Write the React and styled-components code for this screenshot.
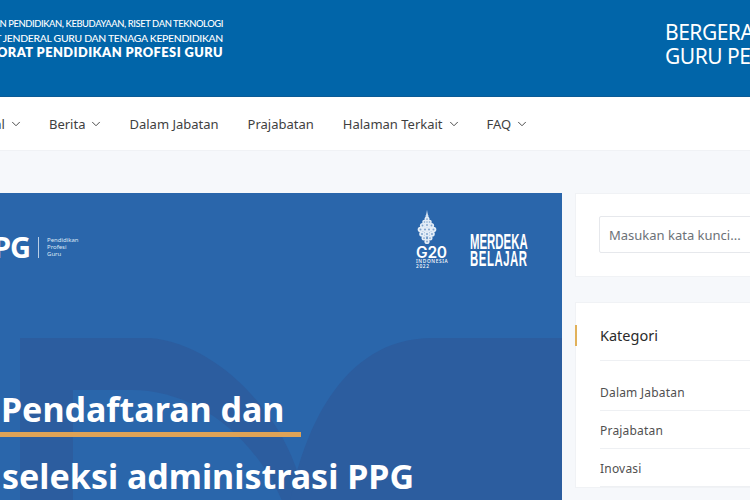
import React from "react";
import styled, { createGlobalStyle } from "styled-components";
import { ChevronDown } from "lucide-react";

const Global = createGlobalStyle`
  html, body {
    margin: 0;
    padding: 0;
    width: 750px;
    height: 500px;
    overflow: hidden;
    background: #f6f8fb;
    font-family: "Noto Sans", "Liberation Sans", sans-serif;
  }
`;

const Page = styled.div`
  width: 750px;
  height: 500px;
  overflow: hidden;
`;

const Header = styled.header`
  height: 97px;
  background: #0165a9;
  border-bottom: 1px solid #0b5b96;
  box-sizing: border-box;
  display: flex;
  color: #fff;
`;

const Brand = styled.div`
  flex: 0 0 223px;
  min-width: 0;
  padding-top: 17px;
  display: flex;
  flex-direction: column;
  align-items: flex-end;
  white-space: nowrap;
`;

const BrandLine = styled.div`
  font-family: "Lato", sans-serif;
  font-size: ${(p) => p.$size};
  font-weight: ${(p) => (p.$big ? 800 : 500)};
  letter-spacing: ${(p) => p.$track};
  line-height: 14px;
`;

const Tagline = styled.div`
  margin-left: 442px;
  padding-top: 21px;
  font-size: 21px;
  letter-spacing: -0.5px;
  line-height: 23.5px;
  white-space: nowrap;
`;

const Nav = styled.nav`
  height: 53px;
  background: #fff;
  border-bottom: 1px solid #f0f2f5;
  display: flex;
  align-items: center;
  gap: 29px;
  margin-left: -31.5px;
`;

const NavItem = styled.a`
  display: flex;
  align-items: center;
  font-size: 13px;
  color: #3f3f3f;
  white-space: nowrap;
  svg {
    margin: 0 -3px 0 4px;
  }
`;

const Main = styled.main`
  display: flex;
  align-items: flex-start;
  gap: 13px;
  margin: 42px 0 0 -38px;
`;

const Banner = styled.section`
  position: relative;
  flex: 0 0 600px;
  height: 320px;
  background: #2a66ab;
  color: #fff;
  overflow: hidden;
`;

const BannerShapes = styled.svg`
  position: absolute;
  inset: 0;
`;

const BannerBody = styled.div`
  position: relative;
  height: 100%;
`;

const BannerTop = styled.div`
  display: flex;
  justify-content: space-between;
  padding: 17px 34px 0 0;
`;

const PpgLogo = styled.div`
  display: flex;
  align-items: center;
  align-self: flex-start;
  margin-top: 26px;
  margin-left: 14px;
`;

const PpgMark = styled.span`
  font-size: 29px;
  font-weight: 700;
  line-height: 22px;
  letter-spacing: -1px;
`;

const PpgDivider = styled.span`
  width: 1px;
  height: 21px;
  margin: 0 8px;
  background: #b9cee6;
`;

const PpgCaption = styled.span`
  font-size: 6px;
  line-height: 7px;
  color: #dce8f5;
`;

const Partners = styled.div`
  display: flex;
  align-items: flex-end;
  gap: 20px;
`;

const G20 = styled.div`
  width: 34px;
  display: flex;
  flex-direction: column;
  align-items: flex-start;
  svg {
    margin-left: 1px;
  }
`;

const G20Mark = styled.span`
  font-family: "Inter", sans-serif;
  font-size: 15.5px;
  font-weight: 600;
  line-height: 12px;
  margin-top: 2px;
  letter-spacing: -0.2px;
`;

const G20Small = styled.span`
  font-size: 4.8px;
  font-weight: 500;
  line-height: 5px;
  letter-spacing: 0.65px;
  white-space: nowrap;
  &:first-of-type {
    margin-top: 1px;
  }
`;

const Merdeka = styled.div`
  font-family: "Liberation Sans", sans-serif;
  font-size: 21.5px;
  font-weight: 700;
  line-height: 17px;
  width: 58px;
  margin-bottom: 1px;
  white-space: nowrap;
  transform: scaleX(0.53);
  transform-origin: left center;
`;

const BelajarLine = styled.span`
  letter-spacing: 1px;
`;

const Title = styled.h1`
  margin: ${(p) => p.$margin};
  font-size: 34px;
  font-weight: 700;
  line-height: 40px;
  white-space: nowrap;
`;

const TitleRule = styled.div`
  width: 339px;
  height: 5px;
  margin: 3px 0 19px;
  background: #dfa356;
`;

const Sidebar = styled.aside`
  flex: 0 0 230px;
  display: flex;
  flex-direction: column;
  gap: 25px;
`;

const Card = styled.div`
  position: relative;
  background: #fff;
  border: 1px solid #f0f2f5;
  box-sizing: border-box;
  padding: ${(p) => p.$pad};
`;

const Search = styled.input`
  display: block;
  box-sizing: border-box;
  width: 100%;
  height: 37px;
  padding: 0 9px;
  border: 1px solid #e6e8ec;
  border-radius: 2px;
  font-family: inherit;
  font-size: 13px;
  color: #6c7278;
  background: #fff;
  outline: none;
  &::placeholder {
    color: #6c7278;
    opacity: 1;
  }
`;

const CardTitle = styled.h2`
  position: relative;
  margin: 0;
  padding: 0 0 15px;
  font-size: 14.5px;
  font-weight: 400;
  line-height: 20px;
  color: #2b2b2b;
  border-bottom: 1px solid #eef0f3;
  &::before {
    content: "";
    position: absolute;
    left: -25px;
    top: 0;
    width: 2px;
    height: 21px;
    background: #e1b15a;
  }
`;

const CatList = styled.ul`
  list-style: none;
  margin: 13px 0 0;
  padding: 0;
`;

const CatItem = styled.li`
  height: 37px;
  margin-top: 1px;
  box-sizing: border-box;
  display: flex;
  align-items: center;
  font-size: 12px;
  letter-spacing: 0.2px;
  color: #505050;
  border-bottom: 1px solid #eef0f3;
`;

function NavLink({ label, menu }) {
  return (
    <NavItem>
      {label}
      {menu && <ChevronDown size={14} strokeWidth={1.6} />}
    </NavItem>
  );
}

function Gunungan() {
  const lobes = [
    [10, 6, 1.5], [10, 9, 2.5], [7.5, 12, 2.3], [12.5, 12, 2.3],
    [5.5, 15.5, 2.6], [10, 15, 2.6], [14.5, 15.5, 2.6],
    [3.5, 19.5, 2.8], [8, 19.5, 2.8], [12, 19.5, 2.8], [16.5, 19.5, 2.8],
    [5, 24, 2.8], [10, 24, 2.8], [15, 24, 2.8],
    [7, 28, 2.5], [13, 28, 2.5], [10, 31.5, 2.6],
  ];
  return (
    <svg width="20" height="35" viewBox="0 0 20 35" fill="none">
      <path d="M10 0 L11 6 H9 Z" fill="#e8f0f8" />
      {lobes.map(([cx, cy, r]) => (
        <g key={`${cx}-${cy}`}>
          <circle cx={cx} cy={cy} r={r} fill="#e4edf7" />
          <circle cx={cx} cy={cy} r={r * 0.35} fill="#7fa3cd" />
        </g>
      ))}
    </svg>
  );
}

export default function App() {
  return (
    <Page>
      <Global />
      <Header>
        <Brand>
          <BrandLine $size="9.4px" $track="-0.4px">KEMENTERIAN PENDIDIKAN, KEBUDAYAAN, RISET DAN TEKNOLOGI</BrandLine>
          <BrandLine $size="10.4px" $track="-0.3px">DIREKTORAT JENDERAL GURU DAN TENAGA KEPENDIDIKAN</BrandLine>
          <BrandLine $big $size="12.8px" $track="0.45px">DIREKTORAT PENDIDIKAN PROFESI GURU</BrandLine>
        </Brand>
        <Tagline>
          BERGERAK BERSAMA
          <br />
          GURU PENGGERAK
        </Tagline>
      </Header>
      <Nav>
        <NavLink label="Portal" menu />
        <NavLink label="Berita" menu />
        <NavLink label="Dalam Jabatan" />
        <NavLink label="Prajabatan" />
        <NavLink label="Halaman Terkait" menu />
        <NavLink label="FAQ" menu />
      </Nav>
      <Main>
        <Banner>
          <BannerShapes width="600" height="320" viewBox="0 0 600 320">
            <path d="M58 145 H188 C250 150 310 210 333 272 L350 320 H58 Z" fill="#2c5d9f" />
            <path d="M111 320 V197 H170 C230 197 295 240 325 320 Z" fill="#2a66ab" />
            <path d="M326 320 C335 260 370 145 470 145 H600 V320 Z" fill="#2c5d9f" />
          </BannerShapes>
          <BannerBody>
            <BannerTop>
              <PpgLogo>
                <PpgMark>PPG</PpgMark>
                <PpgDivider />
                <PpgCaption>
                  Pendidikan
                  <br />
                  Profesi
                  <br />
                  Guru
                </PpgCaption>
              </PpgLogo>
              <Partners>
                <G20>
                  <Gunungan />
                  <G20Mark>G20</G20Mark>
                  <G20Small>INDONESIA</G20Small>
                  <G20Small>2022</G20Small>
                </G20>
                <Merdeka>
                  MERDEKA
                  <br />
                  <BelajarLine>BELAJAR</BelajarLine>
                </Merdeka>
              </Partners>
            </BannerTop>
            <Title $margin="120px 0 0 39px">Pendaftaran dan</Title>
            <TitleRule />
            <Title $margin="0 0 0 40px">seleksi administrasi PPG</Title>
          </BannerBody>
        </Banner>
        <Sidebar>
          <Card $pad="22px 23px 23px">
            <Search placeholder="Masukan kata kunci..." readOnly />
          </Card>
          <Card $pad="22px 24px 0">
            <CardTitle>Kategori</CardTitle>
            <CatList>
              <CatItem>Dalam Jabatan</CatItem>
              <CatItem>Prajabatan</CatItem>
              <CatItem>Inovasi</CatItem>
            </CatList>
          </Card>
        </Sidebar>
      </Main>
    </Page>
  );
}
